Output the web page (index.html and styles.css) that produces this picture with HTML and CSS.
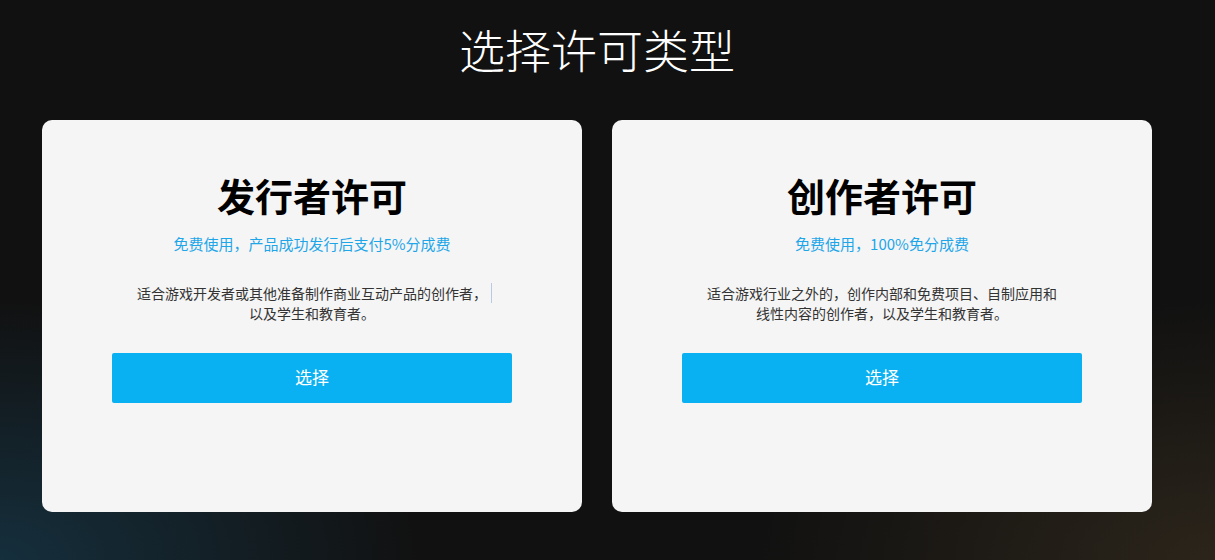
FILE: index.html
```html
<!DOCTYPE html>
<html lang="zh-CN">

<head>
  <meta charset="UTF-8">
  <meta name="viewport" content="width=device-width, initial-scale=1.0">
  <title>选择许可类型</title>
  <link rel="stylesheet" href="styles.css">
</head>

<body>
  <div class="page">
    <h1 class="page-title">选择许可类型</h1>
    <div class="license-list">
      <div class="license-card">
        <h2 class="license-name">发行者许可</h2>
        <p class="license-price">免费使用，产品成功发行后支付5%分成费</p>
        <p class="license-desc">适合游戏开发者或其他准备制作商业互动产品的创作者，<span class="caret"></span>以及学生和教育者。</p>
        <button class="select-btn">选择</button>
      </div>
      <div class="license-card">
        <h2 class="license-name">创作者许可</h2>
        <p class="license-price">免费使用，100%免分成费</p>
        <p class="license-desc">适合游戏行业之外的，创作内部和免费项目、自制应用和线性内容的创作者，以及学生和教育者。</p>
        <button class="select-btn">选择</button>
      </div>
    </div>
  </div>
</body>

</html>
```

FILE: styles.css
```css
html,
body {
  height: 100%;
}

body {
  margin: 0;
  font-family: "Noto Sans CJK SC", "Noto Sans", sans-serif;
  background-color: #111111;
  background-image:
    radial-gradient(ellipse 420px 260px at 0% 100%, rgba(22, 52, 68, 0.85), rgba(22, 52, 68, 0) 100%),
    radial-gradient(ellipse 460px 260px at 100% 100%, rgba(48, 40, 28, 0.85), rgba(48, 40, 28, 0) 100%);
  background-repeat: no-repeat;
  overflow: hidden;
}

.page {
  width: 1110px;
  margin-left: 42px;
}

.page-title {
  margin: 18px 0 42px;
  font-size: 46px;
  line-height: 60px;
  font-weight: 300;
  color: #ffffff;
  text-align: center;
}

.license-list {
  display: flex;
  gap: 30px;
}

.license-card {
  width: 540px;
  height: 392px;
  box-sizing: border-box;
  padding-top: 51px;
  background-color: #f5f5f5;
  border-radius: 10px;
  display: flex;
  flex-direction: column;
  align-items: center;
}

.license-name {
  margin: 0;
  font-size: 38px;
  line-height: 48px;
  font-weight: 700;
  color: #000000;
}

.license-price {
  margin: 14px 0 0;
  font-size: 15px;
  line-height: 22px;
  color: #1ea6e8;
}

.license-desc {
  width: 356px;
  margin: 28px 0 0;
  font-size: 14px;
  line-height: 20px;
  color: #333333;
  text-align: center;
  position: relative;
}

.caret {
  position: absolute;
  left: 357px;
  top: 0;
  height: 20px;
  border-left: 1px solid #b9cbe0;
}

.select-btn {
  width: 400px;
  height: 50px;
  margin-top: 30px;
  padding: 0 0 3px;
  border: none;
  border-radius: 2px;
  background-color: #0ab1f2;
  color: #ffffff;
  font-family: inherit;
  font-size: 17px;
  cursor: pointer;
}

.select-btn:hover {
  background-color: #089fd9;
}
```
